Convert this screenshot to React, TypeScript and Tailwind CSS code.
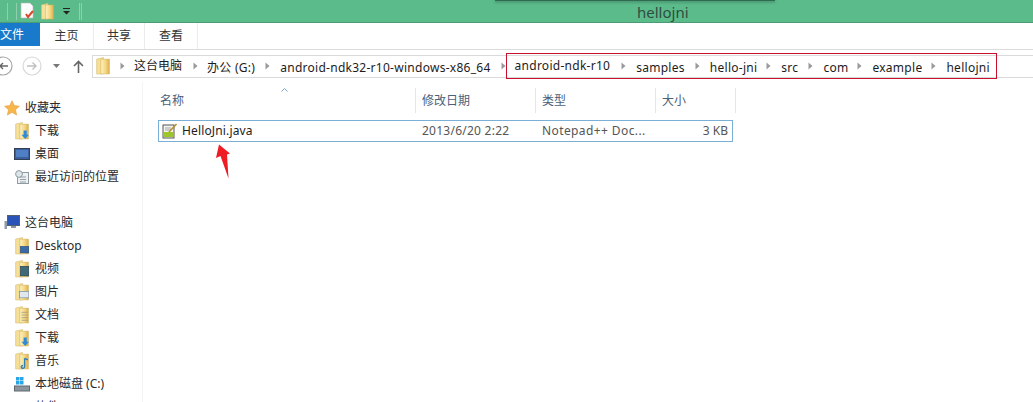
const font = { fontFamily: '"Noto Sans", "Noto Sans CJK SC", sans-serif' };

const Chevron = () => (
  <svg width="5" height="8" viewBox="0 0 5 8" className="shrink-0"><path d="M0.5 0.5 L4.5 4 L0.5 7.5Z" fill="#9a9a9a" /></svg>
);

const Folder = ({ children, w = 14, h = 18 }: { children?: React.ReactNode; w?: number; h?: number }) => (
  <svg width={w} height={h} viewBox="0 0 13 17" className="shrink-0">
    <defs>
      <linearGradient id="fg" x1="0" x2="1" y1="0" y2="0">
        <stop offset="0" stopColor="#fdf3c0" />
        <stop offset="0.6" stopColor="#f2d47e" />
        <stop offset="1" stopColor="#dcae4e" />
      </linearGradient>
    </defs>
    <path d="M0.5 2 L7 0.5 L7 16 L0.5 16Z" fill="#f6e098" stroke="#d9c07a" strokeWidth="0.6" />
    <rect x="4.5" y="2" width="8" height="14" fill="url(#fg)" stroke="#d2ae58" strokeWidth="0.5" />
    {children}
  </svg>
);

const SideFolder = ({ kind }: { kind: string }) => (
  <Folder>
    {kind === 'down' && <path d="M8 8 h3 v4 h2 l-3.5 4 l-3.5 -4 h2z" fill="#2f8ad8" />}
    {kind === 'desk' && <rect x="5" y="9" width="8" height="6" fill="#3b6aa8" stroke="#274a78" strokeWidth="0.6" />}
    {kind === 'video' && <rect x="5" y="6" width="8" height="9" fill="#3f6a78" stroke="#22404c" strokeWidth="0.6" />}
    {kind === 'pic' && <rect x="4" y="8" width="9" height="6" fill="#dfe8ef" stroke="#7b93a6" strokeWidth="0.7" />}
    {kind === 'doc' && <path d="M6 6 h6 M6 8.5 h6 M6 11 h6 M6 13.5 h6" stroke="#9a9a80" strokeWidth="0.7" />}
    {kind === 'music' && <path d="M9 6 v8 a1.6 1.3 0 1 1 -1.4 -1.2 M9 6 l3 1.5" stroke="#2f7fb8" strokeWidth="1.3" fill="none" />}
  </Folder>
);

const Crumb = ({ children }: { children: React.ReactNode }) => (
  <span className="text-[12px] text-[#1c1c1c] whitespace-nowrap leading-none tracking-[0.27px]">{children}</span>
);

const Row = ({ icon, label, bold }: { icon: React.ReactNode; label: string; bold?: boolean }) => (
  <div className={`flex items-center h-[23px] gap-[5px] ${bold ? 'pl-[4px]' : 'pl-[14px]'}`}>
    <span className="w-[16px] flex justify-center shrink-0">{icon}</span>
    <span className="text-[12px] text-[#2a2a2a] whitespace-nowrap leading-none">{label}</span>
  </div>
);

const ColHead = ({ w, label, pad = 'pl-[6px]' }: { w: string; label: string; pad?: string }) => (
  <div className={`${w} ${pad} h-[25px] flex items-center border-r border-[#e5e5e5] text-[12px] text-[#4c607a] leading-none shrink-0`}>{label}</div>
);

export default function App() {
  return (
    <div className="w-[1033px] h-[402px] overflow-hidden bg-white flex flex-col relative" style={font}>
      <div className="h-[23px] bg-[#5cbb8b] border-b border-[#4a9c74] flex items-center relative shrink-0">
        <div className="w-px h-[17px] bg-[#8fd0ae] ml-[7px]" />
        <div className="w-px h-[17px] bg-[#8fd0ae] ml-[8px]" />
        <svg width="16" height="18" viewBox="0 0 16 18" className="ml-[2px]">
          <path d="M2 1 h9 l3 3 v12 h-12z" fill="#fdfdfd" stroke="#bbb" strokeWidth="0.6" />
          <path d="M7 12 l2 3 l5 -6" stroke="#d6492f" strokeWidth="2" fill="none" />
        </svg>
        <span className="ml-[6px]"><Folder w={13} h={17} /></span>
        <svg width="9" height="7" viewBox="0 0 9 7" className="ml-[8px]">
          <path d="M1 0.5 h7" stroke="#222" strokeWidth="1" />
          <path d="M1 3 h7 l-3.5 3.5z" fill="#222" />
        </svg>
        <div className="w-px h-[17px] bg-[#8fd0ae] ml-[8px]" />
        <div className="w-px h-[17px] bg-[#8fd0ae] ml-[1px]" />
        <span className="absolute left-[637px] top-[2px] text-[15px] leading-[20px] text-[#2f4c3e]">hellojni</span>
        <div className="absolute left-[495px] top-0 w-[280px] h-[1px] bg-[#2f6b50] shadow-[0_1px_3px_rgba(30,70,50,0.8)]" />
      </div>

      <div className="h-[27px] flex items-stretch border-b border-[#dcdcdc] shrink-0">
        <div className="w-[40px] bg-[#1979ca] text-white text-[12px] flex items-center mb-[3px]">文件</div>
        <div className="w-[54px] flex items-center justify-center text-[12px] text-[#333] border-r border-[#ececec]">主页</div>
        <div className="w-[51px] flex items-center justify-center text-[12px] text-[#333] border-r border-[#ececec]">共享</div>
        <div className="w-[53px] flex items-center justify-center text-[12px] text-[#333] border-r border-[#ececec]">查看</div>
      </div>

      <div className="h-[32px] flex items-center shrink-0">
        <svg width="14" height="20" viewBox="0 0 14 20" className="shrink-0">
          <circle cx="3" cy="10" r="9" fill="none" stroke="#a8a8a8" strokeWidth="1.2" />
          <path d="M8 10 H0 M3 7 L0 10 L3 13" stroke="#666" strokeWidth="1.4" fill="none" />
        </svg>
        <svg width="20" height="20" viewBox="0 0 20 20" className="ml-[8px] shrink-0">
          <circle cx="10" cy="10" r="9" fill="none" stroke="#d8d8d8" strokeWidth="1.2" />
          <path d="M5 10 H14 M10.5 6.5 L14 10 L10.5 13.5" stroke="#c0c0c0" strokeWidth="1.4" fill="none" />
        </svg>
        <svg width="7" height="4" viewBox="0 0 7 4" className="ml-[11px] shrink-0"><path d="M0 0 h7 l-3.5 4z" fill="#777" /></svg>
        <svg width="11" height="13" viewBox="0 0 11 13" className="ml-[13px] shrink-0">
          <path d="M5.5 13 V1.5 M1 6 L5.5 1.5 L10 6" stroke="#666" strokeWidth="1.6" fill="none" />
        </svg>
        <div className="ml-[8px] flex items-center h-[23px] flex-1 border-y border-l border-[#dadada] pl-[3px]">
          <Folder />
          <span className="ml-[10px]"><Chevron /></span>
          <span className="ml-[9px] whitespace-nowrap text-[12px] text-[#1c1c1c] leading-none">这台电脑</span>
          <span className="ml-[11px]"><Chevron /></span>
          <span className="ml-[9px]"><Crumb>办公 (G:)</Crumb></span>
          <span className="ml-[10px]"><Chevron /></span>
          <span className="ml-[10px]"><Crumb>android-ndk32-r10-windows-x86_64</Crumb></span>
          <span className="ml-[10px]"><Chevron /></span>
          <div className="h-[26px] w-[491px] border border-[#c8102e] flex items-center pl-[8px] shrink-0">
            <Crumb>android-ndk-r10</Crumb>
            <span className="ml-[11px]"><Chevron /></span>
            <span className="ml-[10px]"><Crumb>samples</Crumb></span>
            <span className="ml-[10px]"><Chevron /></span>
            <span className="ml-[10px]"><Crumb>hello-jni</Crumb></span>
            <span className="ml-[9px]"><Chevron /></span>
            <span className="ml-[10px]"><Crumb>src</Crumb></span>
            <span className="ml-[10px]"><Chevron /></span>
            <span className="ml-[10px]"><Crumb>com</Crumb></span>
            <span className="ml-[9px]"><Chevron /></span>
            <span className="ml-[10px]"><Crumb>example</Crumb></span>
            <span className="ml-[9px]"><Chevron /></span>
            <span className="ml-[10px]"><Crumb>hellojni</Crumb></span>
          </div>
        </div>
      </div>

      <div className="flex flex-1 min-h-0">
        <div className="w-[143px] border-r border-[#f4f4f4] shrink-0 pt-[14px]">
          <Row bold label="收藏夹" icon={
            <svg width="16" height="16" viewBox="0 0 16 16"><path d="M8 0.8 L10.2 5.6 L15.4 6.2 L11.5 9.7 L12.6 15 L8 12.3 L3.4 15 L4.5 9.7 L0.6 6.2 L5.8 5.6Z" fill="#f6b64a" stroke="#e59a3c" strokeWidth="0.6" /></svg>
          } />
          <Row label="下载" icon={<SideFolder kind="down" />} />
          <Row label="桌面" icon={
            <svg width="16" height="12" viewBox="0 0 16 12"><rect x="0.5" y="0.5" width="15" height="11" fill="#3a5f9c" stroke="#333f55" /><rect x="2" y="2" width="12" height="7" fill="#4f7fc4" /></svg>
          } />
          <Row label="最近访问的位置" icon={
            <svg width="16" height="16" viewBox="0 0 16 16"><rect x="3.5" y="3.5" width="11" height="11" fill="#eef1f2" stroke="#8d9ba3" /><circle cx="5" cy="5" r="3.4" fill="#dfe6e8" stroke="#8d9ba3" /><path d="M6 8 h6 M6 10.5 h6 M6 13 h6" stroke="#93a0a8" /></svg>
          } />
          <div className="h-[23px]" />
          <Row bold label="这台电脑" icon={
            <svg width="16" height="15" viewBox="0 0 16 15"><rect x="3.5" y="0.5" width="12" height="10" fill="#2a54b8" stroke="#55606e" /><rect x="7" y="11" width="5" height="2" fill="#8b97a5" /><rect x="0.5" y="6" width="2.5" height="8" fill="#8f9ba7" /></svg>
          } />
          <Row label="Desktop" icon={<SideFolder kind="desk" />} />
          <Row label="视频" icon={<SideFolder kind="video" />} />
          <Row label="图片" icon={<SideFolder kind="pic" />} />
          <Row label="文档" icon={<SideFolder kind="doc" />} />
          <Row label="下载" icon={<SideFolder kind="down" />} />
          <Row label="音乐" icon={<SideFolder kind="music" />} />
          <Row label="本地磁盘 (C:)" icon={
            <svg width="16" height="16" viewBox="0 0 16 16"><rect x="2" y="1" width="3.5" height="3.5" fill="#27a5e8" /><rect x="6" y="1" width="3.5" height="3.5" fill="#27a5e8" /><rect x="2" y="5" width="3.5" height="3.5" fill="#27a5e8" /><rect x="6" y="5" width="3.5" height="3.5" fill="#27a5e8" /><rect x="0.5" y="10" width="15" height="5" fill="#8b959e" stroke="#5f6972" /></svg>
          } />
          <div className="h-[23px] pl-[35px] text-[12px] text-[#2a2a2a] leading-[23px]">软件</div>
        </div>

        <div className="flex-1 min-w-0 pl-[15px] pt-[6px]">
          <div className="flex relative">
            <svg width="7" height="4" viewBox="0 0 7 4" className="absolute left-[123px] top-0"><path d="M0.5 3.5 L3.5 0.5 L6.5 3.5" fill="none" stroke="#7aa4c9" strokeWidth="1" /></svg>
            <ColHead w="w-[258px]" label="名称" pad="pl-[2px]" />
            <ColHead w="w-[120px]" label="修改日期" />
            <ColHead w="w-[120px]" label="类型" />
            <ColHead w="w-[80px]" label="大小" />
          </div>
          <div className="mt-[7px] w-[575px] h-[22px] border border-[#7ab0d6] flex items-center text-[12px] leading-none">
            <svg width="16" height="16" viewBox="0 0 16 16" className="ml-[3px] shrink-0">
              <rect x="1" y="2" width="11" height="13" fill="#f3f4ee" stroke="#444" strokeWidth="0.9" />
              <rect x="2" y="9" width="9" height="5" fill="#9cc62c" />
              <path d="M3 5 h6 M3 7 h6" stroke="#888" strokeWidth="0.7" />
              <path d="M7 9 L14.5 1" stroke="#b9902e" strokeWidth="1.6" />
            </svg>
            <span className="ml-[4px] w-[240px] text-[#1d1d1d] shrink-0 tracking-[0.15px]">HelloJni.java</span>
            <span className="w-[120px] text-[#555] shrink-0 tracking-[0.25px]">2013/6/20 2:22</span>
            <span className="w-[120px] text-[#555] shrink-0 tracking-[0.4px]">Notepad++ Doc...</span>
            <span className="w-[66px] text-right text-[#555] shrink-0">3 KB</span>
          </div>
        </div>
      </div>

      <svg width="16" height="36" viewBox="0 0 16 36" className="absolute left-[216px] top-[144px]">
        <path d="M3 0.5 L0 14 L4.5 12 L12.5 34.5 L11 10.5 L14 9.5Z" fill="#ee1c25" />
      </svg>
    </div>
  );
}
